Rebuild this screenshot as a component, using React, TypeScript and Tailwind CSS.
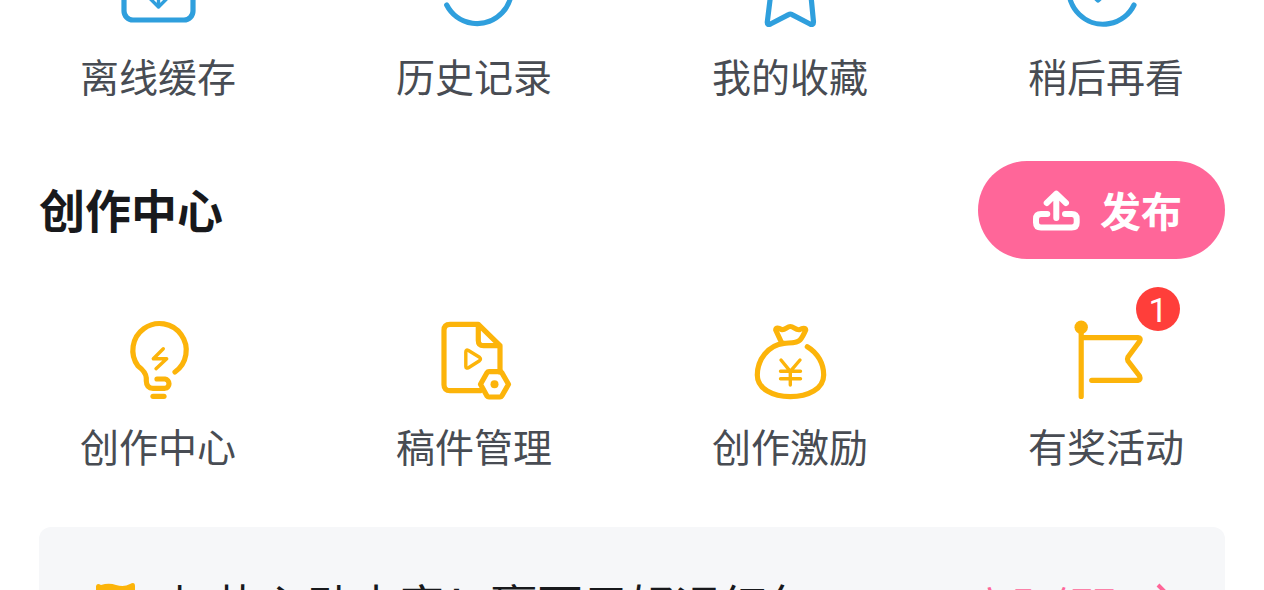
import type { ReactNode } from "react";

interface Entry {
  label: string;
  icon: ReactNode;
  badge?: number;
}

const library: Entry[] = [
  {
    label: "离线缓存",
    icon: (
      <>
        <rect x="14" y="14" width="69" height="64" rx="9" />
        <path d="M48.500 30V64M34.500 51L48.500 65L62.500 51" strokeWidth="3.400" />
      </>
    ),
  },
  {
    label: "历史记录",
    icon: (
      <>
        <path d="M20.700 63A34.300 34.300 0 1 0 17 44.500" />
        <path d="M51 30V48H64" />
      </>
    ),
  },
  {
    label: "我的收藏",
    icon: <path d="M48.300 12L58 35L82 38L69 54L71.500 80Q71.500 83.500 68 82L50 72.600Q48.300 71.600 46.600 72.600L28.500 82Q25 83.500 25.300 80L28.500 54L14 38L38 35Z" />,
  },
  {
    label: "稍后再看",
    icon: (
      <>
        <path d="M76 63A34.300 34.300 0 1 1 79 42" />
        <path d="M28 46L40 58L60 38" />
      </>
    ),
  },
];

const studio: Entry[] = [
  {
    label: "创作中心",
    icon: (
      <>
        <path d="M65 60A26.700 26.700 0 1 0 28 54Q36 60 36.300 66V69Q36.500 76.300 43 76.300H55A4.700 4.700 0 0 0 55 67H47" />
        <path d="M43 84.300H54" />
        <path d="M53.300 36.700L43.300 46.700H56.700L46 56.700" strokeWidth="3.400" />
      </>
    ),
  },
  {
    label: "稿件管理",
    icon: (
      <>
        <path d="M54 78.700H24Q18 78.700 18 72.700V18.300Q18 12.300 24 12.300H52.300L74 33.700V60M52.300 12.300V28.500Q52.300 33.700 57.500 33.700H74" />
        <path d="M39.800 40Q39.800 37 42.500 38.500L53.500 45.300Q55.500 47 53.500 48.700L42.500 55.700Q39.800 57 39.800 54.500Z" strokeWidth="3.400" />
        <path d="M54.500 72.300L61 60.700Q61.700 59.700 63 59.700H74Q75.200 59.700 75.800 60.700L82.500 72.300L75.800 84Q75.200 85 74 85H63Q61.700 85 61 84Z" />
        <circle cx="68.500" cy="72.300" r="4" fill="currentColor" stroke="none" />
      </>
    ),
  },
  {
    label: "创作激励",
    icon: (
      <>
        <path d="M65.300 34.700C76 41 81.700 52 81.700 63C81.700 77 66 84.700 48.300 84.700C31 84.700 15.300 77 15.300 63C15.300 48 26 33 42 31.300C49 30.700 55 31.300 58 28C60.500 25.300 62 22 63.700 18C63.500 15.500 60 16 58 17.500C54 19 52 14.500 48.300 14.500C45 14.500 43 18.500 39.500 17.500C37 16 33.700 15 33.700 18L39.500 30.500" />
        <path d="M39 48L48.300 59.300L58 48M38.500 59.300H58.500M38.500 66.700H58.500M48.300 59.300V73" strokeWidth="3.400" />
      </>
    ),
  },
  {
    label: "有奖活动",
    badge: 1,
    icon: (
      <>
        <circle cx="23.200" cy="15.300" r="6.700" fill="currentColor" stroke="none" />
        <path d="M23.200 16V84.500M23.200 25.700H80Q83.500 26 81.500 29.500L70 45Q69 47 70 49L81.500 64Q83 68 80 68.300H33.700" />
      </>
    ),
  },
];

function EntryGrid({ entries, color }: { entries: Entry[]; color: string }) {
  return (
    <nav className="grid grid-cols-4">
      {entries.map((e) => (
        <a key={e.label} href="#" className="flex flex-col items-center gap-2.5">
          <span className={`relative size-24 ${color}`}>
            <svg
              viewBox="0 0 96 96"
              className="size-24"
              fill="none"
              stroke="currentColor"
              strokeWidth="5.200"
              strokeLinecap="round"
              strokeLinejoin="round"
              aria-hidden="true"
            >
              {e.icon}
            </svg>
            {e.badge && (
              <span className="absolute -top-[25px] left-[78px] flex size-11 items-center justify-center rounded-full bg-[#ff3e3a] pt-0.5 font-[Roboto,sans-serif] text-[34px] text-white">
                {e.badge}
              </span>
            )}
          </span>
          <span className="text-[39px] leading-[54px] text-[#484c53]">{e.label}</span>
        </a>
      ))}
    </nav>
  );
}

export default function App() {
  return (
    <div className="h-screen overflow-hidden bg-white font-['Noto_Sans_CJK_SC',sans-serif]">
      {/* first row is scrolled half out of view */}
      <section className="-mt-[58px]">
        <EntryGrid entries={library} color="text-[#2f9fdd]" />
      </section>

      <header className="mt-[59px] mb-[53px] flex items-center justify-between px-[39px]">
        <h2 className="pb-1 text-[46px] leading-[64px] font-bold text-[#18191c]">创作中心</h2>
        <button type="button" className="flex h-[98px] items-center gap-5 rounded-full bg-[#ff6699] pr-[43px] pl-[54px] text-white">
          <svg viewBox="0 0 48 48" className="size-12" fill="none" stroke="currentColor" strokeWidth="6" strokeLinecap="round" strokeLinejoin="round" aria-hidden="true">
            <path d="M15.300 28H9Q4 28 4 33V36.500Q4 41.500 9 41.500H39.700Q44.700 41.500 44.700 36.500V33Q44.700 28 39.700 28H33" />
            <path d="M24.300 8V32M14.700 17L24.300 7.700L34 17" />
          </svg>
          <span className="pb-0.5 text-[41px] leading-[60px] font-bold">发布</span>
        </button>
      </header>

      <EntryGrid entries={studio} color="text-[#fcb40a]" />

      <a href="#" className="mx-[39px] mt-[55px] flex items-center rounded-xl bg-[#f6f7f9] py-10 pr-[37px] pl-[52px]">
        <svg viewBox="0 0 48 48" className="mr-[30px] size-12 text-[#fcb40a]" fill="currentColor" aria-hidden="true">
          <path d="M5 8Q6 4.500 10 7Q18 4.500 25 7Q33 9.500 39 6Q44 3.500 44 8V38Q42 46 24 46Q7 46 5 38Z" />
        </svg>
        <span className="flex-1 pt-0.5 text-[46px] leading-[68px] text-[#18191c]">加热心动内容！赢百元好运红包</span>
        <span className="pt-1 text-[41px] leading-[60px] text-[#ff6699]">立即领取</span>
        <svg viewBox="0 0 48 48" className="ml-1.5 size-12 text-[#ff6699]" fill="none" stroke="currentColor" strokeWidth="4" aria-hidden="true">
          <path d="M18 7L34 23L18 39" />
        </svg>
      </a>
    </div>
  );
}
